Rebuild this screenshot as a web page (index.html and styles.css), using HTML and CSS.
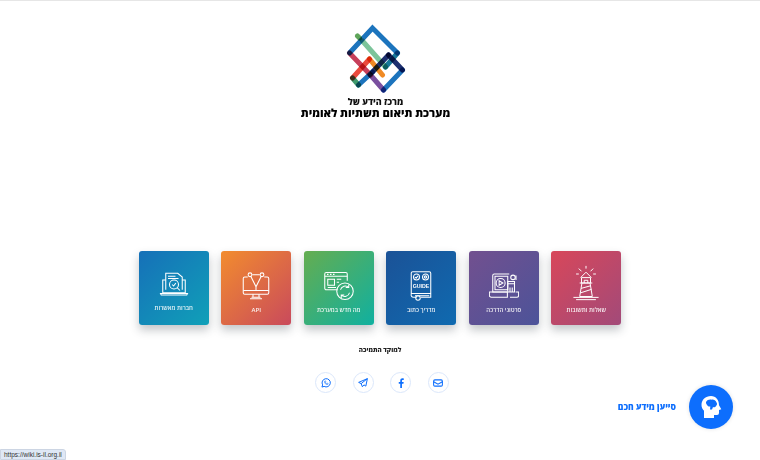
FILE: index.html
```html
<!DOCTYPE html>
<html lang="he" dir="rtl">
  <head>
    <title>מרכז הידע</title>
    <link rel="stylesheet" href="styles.css">
  </head>
  <body>
    <div class="container">
      <header class="logo-block">
        <svg class="logo" width="72" height="72" viewBox="-4.500 0 72 72" fill="none" stroke-width="5" stroke-linecap="round">
          <path d="M18 18 L41 44" stroke="#7cc49a"/>
          <path d="M13 13 L15 15" stroke="#5fa55a"/>
          <path d="M25 36 L38 52" stroke="#f08a24"/>
          <path d="M25 36 L8 55" stroke="#ea4a3c"/>
          <path d="M8 55 L14 62" stroke="#3f9a6c"/>
          <path d="M5 30 L28 5 L53 30" stroke="#1c74bd"/>
          <path d="M5 30 L26 52" stroke="#c63f5a"/>
          <path d="M26 52 L39 67" stroke="#7a4f9f"/>
          <path d="M39 67 L58 47" stroke="#1c74bd"/>
          <path d="M53 30 L41 44" stroke="#17799a"/>
          <path d="M44 32 L58 47" stroke="#1d2f6f"/>
          <path d="M44 32 L28 49" stroke="#1d2f6f"/>
          <path d="M28 49 L14 62" stroke="#1c74bd"/>
        </svg>
        <div class="logo-sub">מרכז הידע של</div>
        <div class="logo-title">מערכת תיאום תשתיות לאומית</div>
      </header>

      <section class="cards">
        <a class="card card-red">
          <svg class="card-icon card-icon-tall" viewBox="5 0 30 40" fill="none" stroke="#fff" stroke-width="1.1">
            <path d="M20 1v3M12 4l3 3M28 4l-3 3M9 10h3M28 10h3"/>
            <path d="M14 14 20 8l6 6M15 14h10v6H15zM18 20v-3h4v3M13 20h14"/>
            <path d="M15.500 20 13 35h14l-2.500-15M14.500 26l11-3M13.800 31l12.400-4"/>
            <path d="M6 36h28M9 38.500h22"/>
          </svg>
          <span class="card-label">שאלות ותשובות</span>
        </a>
        <a class="card card-purple">
          <svg class="card-icon" viewBox="0 0 40 40" fill="none" stroke="#fff" stroke-width="1.400">
            <path d="M27 4H7a2 2 0 0 0-2 2v22h19M36 12v-6"/>
            <path d="M8 7h17v18H8z"/>
            <circle cx="15.500" cy="16" r="6"/>
            <path d="m13.500 13 5 3-5 3z"/>
            <path d="M0.500 28h24v7H3a2.500 2.500 0 0 1-2.500-2.500zM28 35h9a2.500 2.500 0 0 0 2.500-2.500V28h-4"/>
            <circle cx="32" cy="8.500" r="3"/>
            <path d="M25 14h9v3h-9zM25 17h9v11h-9zM28 22v6M31 22v6"/>
          </svg>
          <span class="card-label">סרטוני הדרכה</span>
        </a>
        <a class="card card-blue">
          <svg class="card-icon" viewBox="0 0 40 40" fill="none" stroke="#fff" stroke-width="1.400">
            <path d="M7 31V3a2 2 0 0 1 2-2h22a2 2 0 0 1 2 2v28M7 31a3 3 0 0 0 3 4h4M33 31v4H20M7 30h26"/>
            <circle cx="14" cy="8" r="4"/>
            <path d="m12 8 1.500 1.500L16 6.500"/>
            <circle cx="26" cy="8" r="4"/>
            <circle cx="26" cy="8" r="1.500"/>
            <text class="guide-text" x="20" y="22" text-anchor="middle">GUIDE</text>
            <path d="M12 33h19"/>
            <circle cx="16" cy="36" r="3"/>
          </svg>
          <span class="card-label">מדריך כתוב</span>
        </a>
        <a class="card card-green">
          <svg class="card-icon" viewBox="0 0 40 40" fill="none" stroke="#fff" stroke-width="1.400">
            <path d="M18 25H3a2 2 0 0 1-2-2V4a2 2 0 0 1 2-2h26a2 2 0 0 1 2 2v9"/>
            <path d="M1 7h30M4 4.500h2M8 4.500h2M12 4.500h2"/>
            <rect x="5" y="11" width="9" height="8"/>
            <path d="M17 11h6M17 15h3M5 22h11"/>
            <circle cx="28" cy="27" r="11"/>
            <path d="M22 25a6.500 6.500 0 0 1 11-3M34 29a6.500 6.500 0 0 1-11 3M33 18v4h-4M23 36v-4h4"/>
          </svg>
          <span class="card-label">מה חדש במערכת</span>
        </a>
        <a class="card card-orange">
          <svg class="card-icon" viewBox="0 0 40 40" fill="none" stroke="#fff" stroke-width="1.400">
            <path d="M9 8H5a2 2 0 0 0-2 2v19a2 2 0 0 0 2 2h30a2 2 0 0 0 2-2V10a2 2 0 0 0-2-2h-4"/>
            <path d="M3 26h34M16 31v4M24 31v4M12 37h16M14 35h12"/>
            <circle cx="12" cy="5" r="2.500"/>
            <circle cx="28" cy="5" r="2.500"/>
            <path d="m13 7 7 14 7-14M15 5h10M20 21v5"/>
          </svg>
          <span class="card-label">API</span>
        </a>
        <a class="card card-teal">
          <svg class="card-icon" viewBox="0 0 40 40" fill="none" stroke="#fff" stroke-width="1.400">
            <path d="M9 12H5v17h30V12h-4M2 30h36l-1 2H3z"/>
            <path d="M9 25V3h16l6 5v17"/>
            <path d="M12 7h10M12 10h14"/>
            <circle cx="20" cy="18" r="6"/>
            <path d="m17.500 18 2 2 3-4M24 22l4 4"/>
          </svg>
          <span class="card-label card-label-up">חברות מאשרות</span>
        </a>
      </section>

      <a class="support-link">למוקד התמיכה</a>

      <nav class="socials">
        <a class="social">
          <svg width="10" height="10" viewBox="0 0 16 16" fill="none" stroke="#0d6efd" stroke-width="1.7"><rect x="1" y="3" width="14" height="10" rx="2"/><path d="m1 6 7 4 7-4"/></svg>
        </a>
        <a class="social">
          <svg width="10" height="10" viewBox="0 0 16 16" fill="#0d6efd"><path d="M9.500 16V9h2.400l.4-2.800H9.500V4.500c0-.8.300-1.400 1.400-1.400h1.500V.6C12.100.5 11.300.4 10.400.4 8.300.4 6.800 1.700 6.800 4.100v2.100H4.400V9h2.400v7z"/></svg>
        </a>
        <a class="social">
          <svg width="10" height="10" viewBox="0 0 16 16" fill="none" stroke="#0d6efd" stroke-width="1.600" stroke-linejoin="round"><path d="M15 1 1 7l4 2 2 5 2.500-3 3 2zM15 1 5 9"/></svg>
        </a>
        <a class="social">
          <svg width="10" height="10" viewBox="0 0 16 16" fill="none" stroke="#0d6efd" stroke-width="1.600"><path d="M1.500 14.500 2.600 11A6.600 6.600 0 1 1 5 13.400z"/><path d="M5.500 5.500c0 3 2 5 5 5l1-1.500-2-1-.8.700c-.7-.3-1.200-.9-1.500-1.500l.7-.8-1-2z" stroke-width="1"/></svg>
        </a>
      </nav>
    </div>

    <div class="assistant">
      <span class="assistant-label">סייען מידע חכם</span>
      <span class="assistant-btn">
        <svg width="26" height="26" viewBox="0 0 26 26">
          <path d="M13 2C7.500 2 3.500 5.800 3.500 11c0 2.500 1 4.300 2.500 5.800V24h10v-3h3a2 2 0 0 0 2-2v-3l2.300-.8-2.300-4C21 6 18 2 13 2z" fill="#fff"/>
          <path d="M8 8c1-2 3.500-2.800 5.500-2.300 1.500-.5 4.500.5 5 2.800.8 1 .7 2.500-.3 3.200-.5 1.300-2 1.800-3.200 1.300l-1 2.500h-2l.3-3c-1.500.3-3-.5-3.600-2-.7-1-.7-1.800-.7-2.500z" fill="#0d6efd"/>
        </svg>
      </span>
    </div>

    <div class="status-tip">https://wiki.is-il.org.il</div>
  </body>
</html>
```

FILE: styles.css
```css
* {
  box-sizing: border-box;
}
html,
body {
  height: 100%;
  margin: 0;
}
body {
  background: #fff;
  border-top: 1px solid #e6e6e6;
  font-family: "Open Sans", "Liberation Sans", sans-serif;
  overflow: hidden;
}
.container {
  display: flex;
  flex-direction: column;
  align-items: center;
  padding-top: 22px;
}
.logo-block {
  display: flex;
  flex-direction: column;
  align-items: center;
  height: 228px;
  margin-right: 9px;
}
.logo {
  display: block;
}
.logo path {
  mix-blend-mode: multiply;
}
.logo-sub {
  margin-top: 2px;
  font-size: 9px;
  line-height: 10px;
  font-weight: 800;
  color: #111;
}
.logo-title {
  font-size: 11.200px;
  line-height: 12px;
  font-weight: 800;
  color: #000;
}
.cards {
  display: flex;
  justify-content: center;
  gap: 12.500px;
}
.card {
  display: flex;
  flex-direction: column;
  align-items: center;
  width: 70px;
  height: 74px;
  padding-top: 20px;
  border-radius: 3px;
  box-shadow: 0 5px 10px rgba(40, 50, 60, 0.28);
}
.card-icon {
  width: 30px;
  height: 30px;
}
.card-icon-tall {
  height: 36px;
  margin-top: -6px;
}
.card-label {
  margin-top: 4px;
  font-size: 6px;
  line-height: 10px;
  font-weight: 600;
  color: #fff;
  opacity: 0.9;
}
.card-label-up {
  margin-top: 2px;
}
.guide-text {
  font-family: "Liberation Sans", sans-serif;
  font-size: 7px;
  font-weight: 700;
  fill: #fff;
  stroke: none;
}
.card-red {
  background: linear-gradient(135deg, #d8475a, #a24a79);
}
.card-purple {
  background: linear-gradient(135deg, #72508f, #4c5399);
}
.card-blue {
  background: linear-gradient(135deg, #1b5297, #0f6ab0);
}
.card-green {
  background: linear-gradient(135deg, #65ad50, #10b0a0);
}
.card-orange {
  background: linear-gradient(135deg, #f28c2e, #c94a5c);
}
.card-teal {
  background: linear-gradient(135deg, #1670b8, #10a0b8);
}
.support-link {
  margin-top: 19px;
  font-size: 6.400px;
  line-height: 11px;
  font-weight: 800;
  color: #222;
}
.socials {
  display: flex;
  gap: 16.500px;
  margin-top: 17px;
  padding-left: 4px;
}
.social {
  display: flex;
  align-items: center;
  justify-content: center;
  width: 21px;
  height: 21px;
  border: 1px solid #dbe7fb;
  border-radius: 50%;
}
.assistant {
  position: fixed;
  top: 385px;
  left: 618px;
  display: flex;
  align-items: center;
  direction: ltr;
  gap: 13px;
}
.assistant-label {
  width: 58px;
  direction: rtl;
  white-space: nowrap;
  font-size: 8.600px;
  font-weight: 800;
  color: #0d6efd;
}
.assistant-btn {
  display: flex;
  align-items: center;
  justify-content: center;
  width: 44px;
  height: 44px;
  border-radius: 50%;
  background: #0d6efd;
  box-shadow: 0 0 4px rgba(0, 0, 0, 0.12);
}
.status-tip {
  position: fixed;
  left: 0;
  bottom: 0;
  height: 11px;
  padding: 0 3px;
  direction: ltr;
  background: #dfe8f5;
  border: 1px solid #ccd5e3;
  border-radius: 0 3px 0 0;
  font-family: "Liberation Sans", sans-serif;
  font-size: 6.500px;
  line-height: 9px;
  color: #333;
}
```
